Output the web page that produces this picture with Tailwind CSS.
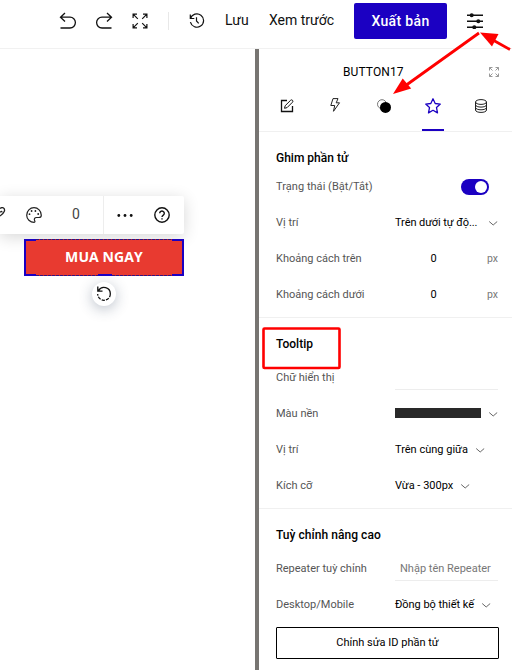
<!DOCTYPE html>
<html lang="vi">
<head>
<meta charset="utf-8">
<title>Editor</title>
<script src="https://cdn.jsdelivr.net/npm/@tailwindcss/browser@4"></script>
</head>
<body class="relative flex h-[670px] w-[512px] flex-col overflow-hidden bg-white font-[Roboto,'Liberation_Sans',sans-serif] text-[11px] text-black">
<header class="flex h-[49px] shrink-0 border-b border-[#f1f1f1] text-[14px] text-[#111]">
  <div class="flex h-[41px] w-full items-center pl-[59px]">
    <svg class="h-[18px] w-[18px] shrink-0" viewBox="0 0 18 18" fill="none" stroke="#111" stroke-width="1.3"><path d="M6 1 1.5 5.2 6 9.4M1.5 5.2H11a5.3 5.3 0 0 1 0 10.8H1.5"/></svg>
    <svg class="ml-[18px] h-[18px] w-[18px] shrink-0" viewBox="0 0 18 18" fill="none" stroke="#111" stroke-width="1.3"><path d="M12 1l4.5 4.2L12 9.4M16.500 5.200H7a5.300 5.300 0 0 0 0 10.800h9.500"/></svg>
    <svg class="ml-[19px] h-4 w-4 shrink-0" viewBox="0 0 16 16" fill="none" stroke="#111" stroke-width="1.2"><path d="M1.100 5V1.100H5M1.100 1.100l4.700 4.700M11 1.100h3.900V5M14.900 1.100l-4.700 4.700M1.100 11v3.900H5M1.100 14.900l4.700-4.700M11 14.900h3.900V11M14.900 14.900l-4.700-4.700"/></svg>
    <i class="ml-5 h-[18px] w-px shrink-0 bg-[#e8e8e8]"></i>
    <svg class="ml-5 h-4 w-4 shrink-0" viewBox="0 0 16 16" fill="none" stroke="#111" stroke-width="1.200"><path d="M1.300 1.500v4h4M1.500 5.500A6.700 6.700 0 1 1 1.400 9.200M7.500 4.200V8l2.200 2.400"/></svg>
    <span class="ml-[20px] w-[44px] shrink-0 whitespace-nowrap">Lưu</span>
    <span class="w-[85px] shrink-0 whitespace-nowrap">Xem trước</span>
    <button class="mt-[1px] flex h-9 w-[93px] shrink-0 items-center justify-center rounded-[2px] bg-[#1b00c2] text-[14px] font-medium tracking-[.35px] text-white">Xuất bản</button>
    <svg class="ml-5 h-4 w-4 shrink-0" viewBox="0 0 16 16" fill="#111" stroke="#111" stroke-width="1.500"><path d="M0 2.200h16M0 8.200h16M0 14.200h16"/><g stroke="none"><circle cx="4.700" cy="2.200" r="2"/><circle cx="11.300" cy="8.200" r="2"/><circle cx="7.300" cy="14.200" r="2"/></g></svg>
  </div>
</header>
<main class="flex min-h-0 flex-1">
  <section class="flex w-[255px] shrink-0 flex-col pt-[147px]">
    <div class="flex h-[38px] w-[184px] items-center rounded-r-[2px] bg-white shadow-[0_3px_16px_rgba(0,0,0,.16)]">
      <svg class="h-4 w-[7px] shrink-0" viewBox="0 0 7 16" fill="none" stroke="#222" stroke-width="1.300"><path d="M0 1.600C2.500-.7 5.500 1.400 4.200 4.600 3.600 6.200 2 7.800 0 9M0 5.200Q2.200 3.600 1.800 5.400"/></svg>
      <svg class="ml-[19px] h-4 w-4 shrink-0" viewBox="0 0 16 16" fill="none" stroke="#222" stroke-width="1.200"><path d="M15.300 8.200C15.300 4 12 .7 8 .7S.7 4 .7 8.200c0 4 3.400 7.100 7.400 7.100 1.100 0 1-.9.500-1.900-.8-1.600.2-2.900 1.900-2.900h2.300c1.600 0 2.500-.9 2.500-2.300Z"/><g fill="#222" stroke="none"><circle cx="5.600" cy="4" r=".9"/><circle cx="9.400" cy="4" r=".9"/><circle cx="3.500" cy="7.200" r=".9"/><circle cx="12.200" cy="7" r=".9"/></g></svg>
      <span class="ml-[30px] w-[31px] pb-[2px] text-[14px] text-[#444]">0</span>
      <i class="h-full w-px shrink-0 bg-[#ededed]"></i>
      <svg class="ml-[13px] h-4 w-4 shrink-0" viewBox="0 0 16 16" fill="#111"><circle cx="1.800" cy="8.500" r="1.400"/><circle cx="8" cy="8.500" r="1.400"/><circle cx="14.200" cy="8.500" r="1.400"/></svg>
      <svg class="ml-[21px] h-4 w-4 shrink-0" viewBox="0 0 16 16" fill="none" stroke="#111" stroke-width="1.400"><circle cx="8" cy="8" r="7.200"/><path d="M5.700 6.300a2.300 2.200 0 1 1 3.600 1.800C8.400 8.700 8 9 8 9.900M8 11.200v1.400"/></svg>
    </div>
    <div class="relative ml-6 mt-[5px] flex h-[37px] w-40 items-center justify-center bg-[#e83a30] font-['Open_Sans',sans-serif] text-[14px] font-bold text-white">
      <svg class="absolute inset-0 h-[37px] w-40" viewBox="0 0 160 37" fill="none"><path d="M12 .5h136M12 36.500h136" stroke="#c21a24"/><path d="M12 .5h136M12 36.500h136" stroke="#32147f" stroke-dasharray="3 1"/><path d="M12 1H1v35h11M148 1h11v35h-11M74 36h14" stroke="#1b00c2" stroke-width="2"/></svg>
      <span class="relative -top-px whitespace-nowrap tracking-[.1px]">MUA NGAY</span>
    </div>
    <div class="ml-[92px] mt-[6px] flex h-6 w-6 items-center justify-center rounded-full bg-white shadow-[0_3px_14px_rgba(30,50,80,.3)]">
      <svg class="h-4 w-4" viewBox="0 0 16 16" fill="none" stroke="#111" stroke-width="1.300"><path d="M1.800 .5v4.700h4.700M2.500 4.700a6.300 6.300 0 0 1 11.800 3.300"/><path d="M14.300 8A6.300 6.300 0 1 1 1.700 8" stroke-dasharray="3.200 1.200"/></svg>
    </div>
  </section>
  <div class="w-1 shrink-0 bg-[#777572]"></div>
  <aside class="flex w-[253px] shrink-0 flex-col">
    <div class="flex h-[83px] shrink-0 flex-col border-b border-[#f0f0f0]">
      <div class="flex h-[46px] items-center pl-[84px] pr-[13px]">
        <span class="w-[61px] whitespace-nowrap text-[12px] tracking-[.1px]">BUTTON17</span>
        <svg class="ml-auto h-[10px] w-[10px]" viewBox="0 0 10 10" fill="none" stroke="#999"><path d="M.5 3.500v-3h3M.5.5l3 3M6.500.5h3v3M9.500.5l-3 3M.5 6.500v3h3M.5 9.500l3-3M6.500 9.500h3v-3M9.500 9.500l-3-3"/></svg>
      </div>
      <nav class="flex h-9 pl-[17px]">
        <div class="flex w-[22px] justify-center pt-1"><svg class="h-[14px] w-[14px]" viewBox="0 0 14 14" fill="none" stroke="#111"><path d="M7 1.500H1.500v11h11V7" stroke-width="1.300"/><path d="m5.200 6.700 5.400-5.400q1-.9 1.900 0t0 1.900L7.100 8.600l-2.600.7Z"/></svg></div>
        <div class="ml-[26px] flex w-[22px] justify-center pt-[3px]"><svg class="h-[14px] w-[14px]" viewBox="0 0 14 14" fill="none" stroke="#222"><path d="M5 .6h5L8.200 4.800h3.300L5.500 13.300 6.700 7.500H2.800Z"/></svg></div>
        <div class="ml-[27px] flex w-[22px] justify-center pt-1"><svg class="h-[14px] w-[14px]" viewBox="0 0 14 14"><circle cx="5" cy="5.200" r="4.500" fill="white" stroke="#777"/><circle cx="8.500" cy="8.400" r="5.500" fill="#000"/></svg></div>
        <div class="ml-[27px] flex w-[22px] justify-center border-b-2 border-[#1b00c2] pt-[3px]"><svg class="h-4 w-4" viewBox="0 0 16 16" fill="none" stroke="#1b00c2" stroke-width="1.300"><path d="m8 .8 2.200 4.700 5.100.6-3.800 3.500 1 5.300L8 12.300l-4.500 2.600 1-5.300L.7 6.100l5.100-.6Z" stroke-linejoin="round"/></svg></div>
        <div class="ml-[26px] flex w-[22px] justify-center pt-1"><svg class="h-[14px] w-3" viewBox="0 0 12 14" fill="none" stroke="#222"><ellipse cx="6" cy="3" rx="5.500" ry="2.400"/><path d="M.5 3v8c0 3.200 11 3.200 11 0V3M.5 5.700c0 3.200 11 3.200 11 0M.5 8.400c0 3.200 11 3.200 11 0"/></svg></div>
      </nav>
    </div>

    <div class="flex h-[186px] shrink-0 flex-col border-b border-[#f0f0f0] pl-[17px] pr-[14px] pt-4">
      <h2 class="h-[21px] text-[12px] font-medium leading-5">Ghim phần tử</h2>
      <div class="flex h-9 items-center text-[#555]"><span class="w-[185px] whitespace-nowrap tracking-[.04px]">Trạng thái (Bật/Tắt)</span><span class="flex h-4 w-7 items-center justify-end rounded-full bg-[#1b00c2] px-[2px]"><i class="h-3 w-3 rounded-full bg-white"></i></span></div>
      <div class="flex h-9 items-center"><span class="w-[119px] text-[#555]">Vị trí</span><span class="whitespace-nowrap tracking-[-.08px]">Trên dưới tự độ...</span><svg class="ml-auto h-[5px] w-[9px]" viewBox="0 0 9 5" fill="none" stroke="#666"><path d="m.2.500 4 3.500 4-3.500"/></svg></div>
      <div class="flex h-9 items-center"><span class="w-[154px] whitespace-nowrap text-[#555]">Khoảng cách trên</span><span class="pl-[.5px] pt-px">0</span><span class="ml-auto text-[10.500px] text-[#777]">px</span></div>
      <div class="flex h-9 items-center"><span class="w-[154px] whitespace-nowrap text-[#555]">Khoảng cách dưới</span><span class="pl-[.5px] pt-px">0</span><span class="ml-auto text-[10.500px] text-[#777]">px</span></div>
    </div>

    <div class="flex h-[191px] shrink-0 flex-col border-b border-[#f0f0f0] pl-[17px] pr-[14px] pt-4">
      <h2 class="h-[26px] text-[12px] font-medium leading-5">Tooltip</h2>
      <div class="flex h-9"><span class="w-[119px] leading-9 text-[#555]">Chữ hiển thị</span><span class="h-[30px] w-[103px] shrink-0 border-b border-[#ededed]"></span></div>
      <div class="flex h-9 items-center"><span class="w-[119px] text-[#555]">Màu nền</span><span class="mb-[3px] h-[10px] w-[86px] bg-[#292929]"></span><svg class="ml-auto h-[5px] w-[9px]" viewBox="0 0 9 5" fill="none" stroke="#666"><path d="m.2.500 4 3.500 4-3.500"/></svg></div>
      <div class="flex h-9 items-center"><span class="w-[119px] text-[#555]">Vị trí</span><span class="whitespace-nowrap">Trên cùng giữa</span><svg class="ml-2 h-[5px] w-[9px]" viewBox="0 0 9 5" fill="none" stroke="#666"><path d="m.2.500 4 3.500 4-3.500"/></svg></div>
      <div class="flex h-9 items-center"><span class="w-[119px] text-[#555]">Kích cỡ</span><span class="whitespace-nowrap">Vừa - 300px</span><svg class="ml-2 h-[5px] w-[9px]" viewBox="0 0 9 5" fill="none" stroke="#666"><path d="m.2.500 4 3.500 4-3.500"/></svg></div>
    </div>

    <div class="flex flex-col pl-[17px] pr-[13px] pt-4">
      <h2 class="h-[26px] text-[12px] font-medium leading-5 tracking-[.05px]">Tuỳ chỉnh nâng cao</h2>
      <div class="flex h-9"><span class="w-[119px] whitespace-nowrap leading-9 text-[#555]">Repeater tuỳ chỉnh</span><span class="h-[30px] w-[103px] whitespace-nowrap border-b border-[#ededed] pl-[5px] leading-9 text-[#777]">Nhập tên Repeater</span></div>
      <div class="flex h-9 items-center"><span class="w-[119px] text-[#555]">Desktop/Mobile</span><span class="whitespace-nowrap tracking-[-.04px]">Đồng bộ thiết kế</span><svg class="ml-2 h-[5px] w-[9px]" viewBox="0 0 9 5" fill="none" stroke="#666"><path d="m.2.500 4 3.500 4-3.500"/></svg></div>
      <button class="mt-1 h-8 w-[223px] rounded-[1px] border border-black text-[11px]">Chỉnh sửa ID phần tử</button>
    </div>
  </aside>
</main>
<svg class="pointer-events-none absolute inset-0 h-[670px] w-[512px]" viewBox="0 0 512 670" fill="none" stroke="#ff0000" stroke-width="2.800"><path d="M479 33 405 86M510 49.500l-18-10"/><g fill="#ff0000" stroke="none"><path d="m393 94 9.700-15.500 8.500 10Z"/><path d="m480 32.500 18.500 1.500-6.500 12.500Z"/></g><rect x="263.500" y="328.500" width="76" height="39.500" rx="1" stroke-width="2.600"/></svg>
</body>
</html>
